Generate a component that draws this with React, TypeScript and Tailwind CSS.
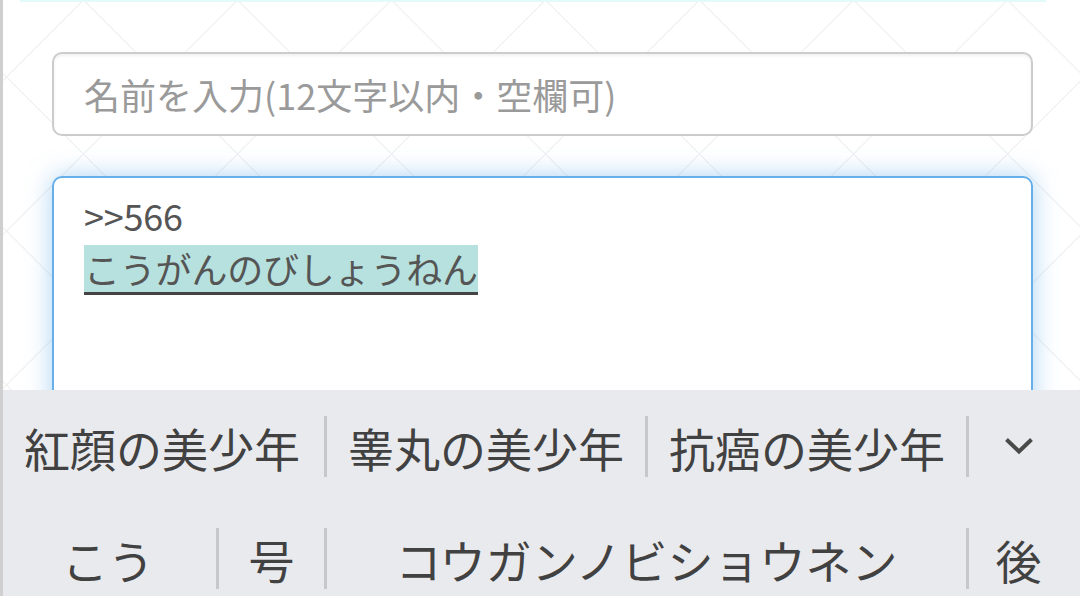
import React from "react";

const font = "font-['Noto_Sans_CJK_JP','Noto_Sans',sans-serif]";

function Sep() {
  return <div className="h-[61px] w-[3px] shrink-0 bg-[#c6c7cb]" />;
}

function Cell({ w, children }: { w: string; children: React.ReactNode }) {
  return (
    <div className={`${w} flex h-[61px] shrink-0 items-center justify-center text-[46px] leading-none text-[#414141]`}>
      {children}
    </div>
  );
}

function ChevronDown() {
  return (
    <svg width="28" height="17" viewBox="0 0 28 17" fill="none" className="shrink-0">
      <polyline
        points="1.5,1.5 14,13.5 26.5,1.5"
        stroke="#4a4a4a"
        strokeWidth="4"
        strokeLinecap="butt"
        strokeLinejoin="miter"
      />
    </svg>
  );
}

export default function App(): React.ReactElement {
  return (
    <div
      className={`${font} flex h-[596px] w-[1080px] flex-col overflow-hidden border-l-[3px] border-[#cfcfcf] bg-white bg-[repeating-linear-gradient(135deg,transparent_0_56px,#f3f3f3_56px_57.5px,transparent_57.5px_108.9px),repeating-linear-gradient(45deg,transparent_0_42px,#f3f3f3_42px_43.5px,transparent_43.5px_108.9px)]`}
    >
      {/* form area */}
      <div className="h-[390px] shrink-0 overflow-hidden">
        <div className="ml-[17px] mr-[34px] h-[2px] bg-[#e3fafa]" />
        <div className="pl-[49px] pr-[47px] pt-[50px]">
          <div className="flex h-[84px] items-center rounded-[10px] border-2 border-[#cccccc] bg-white pl-[30px] text-[36px] text-[#9a9a9a] shadow-[inset_0_2px_3px_rgba(0,0,0,0.06)]">
            名前を入力(12文字以内・空欄可)
          </div>
          <div className="mt-[40px] h-[320px] rounded-[10px] border-2 border-[#66afe9] bg-white px-[30px] pt-[11px] text-[36px] tracking-[-0.2px] text-[#555555] shadow-[0_0_24px_rgba(102,175,233,0.55)]">
            <div className="h-[52px] leading-[52px]">&gt;&gt;566</div>
            <div className="h-[52px]">
              <span className="inline-block h-[50px] border-b-[3px] border-[#444444] bg-[#b6e1de] leading-[47px]">
                こうがんのびしょうねん
              </span>
            </div>
          </div>
        </div>
      </div>

      {/* keyboard suggestions */}
      <div className="-ml-[3px] flex-1 bg-[#e9eaed] pt-[26px]">
        <div className="flex items-center">
          <Cell w="w-[324px]">紅顔の美少年</Cell>
          <Sep />
          <Cell w="w-[318px]">睾丸の美少年</Cell>
          <Sep />
          <Cell w="w-[318px]">抗癌の美少年</Cell>
          <Sep />
          <Cell w="w-[99px]">
            <ChevronDown />
          </Cell>
        </div>
        <div className="mt-[51px] flex items-center">
          <Cell w="w-[216px]">こう</Cell>
          <Sep />
          <Cell w="w-[105px]">号</Cell>
          <Sep />
          <Cell w="w-[639px]">コウガンノビショウネン</Cell>
          <Sep />
          <Cell w="w-[99px]">後</Cell>
        </div>
      </div>
    </div>
  );
}
